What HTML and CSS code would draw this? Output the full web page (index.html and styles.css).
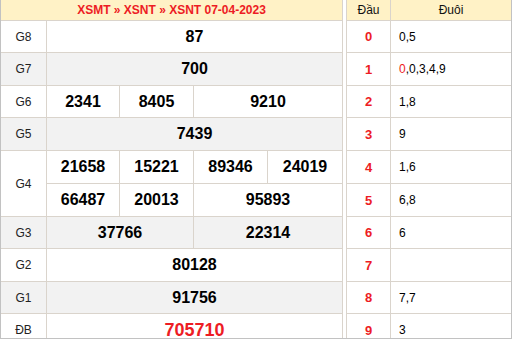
FILE: index.html
```html
<!DOCTYPE html>
<html lang="vi">
<head>
<meta charset="utf-8">
<title>XSNT 07-04-2023</title>
<link rel="stylesheet" href="styles.css">
</head>
<body>
<div class="frame">
  <div class="kq">
    <div class="c hdr full">XSMT » XSNT » XSNT 07-04-2023</div>

    <div class="c lbl">G8</div>
    <div class="c num span4">87</div>

    <div class="c lbl alt">G7</div>
    <div class="c num span4 alt">700</div>

    <div class="c lbl">G6</div>
    <div class="c num">2341</div>
    <div class="c num">8405</div>
    <div class="c num span2">9210</div>

    <div class="c lbl alt">G5</div>
    <div class="c num span4 alt">7439</div>

    <div class="c lbl rows2">G4</div>
    <div class="c num">21658</div>
    <div class="c num">15221</div>
    <div class="c num">89346</div>
    <div class="c num">24019</div>
    <div class="c num">66487</div>
    <div class="c num">20013</div>
    <div class="c num span2">95893</div>

    <div class="c lbl alt">G3</div>
    <div class="c num span2 alt">37766</div>
    <div class="c num span2 alt">22314</div>

    <div class="c lbl">G2</div>
    <div class="c num span4">80128</div>

    <div class="c lbl alt">G1</div>
    <div class="c num span4 alt">91756</div>

    <div class="c lbl">ĐB</div>
    <div class="c num span4 db">705710</div>
  </div>

  <div class="lt">
    <div class="c hdr2">Đầu</div>
    <div class="c hdr2">Đuôi</div>

    <div class="c dau">0</div><div class="c duoi">0,5</div>
    <div class="c dau">1</div><div class="c duoi"><span class="red">0</span>,0,3,4,9</div>
    <div class="c dau">2</div><div class="c duoi">1,8</div>
    <div class="c dau">3</div><div class="c duoi">9</div>
    <div class="c dau">4</div><div class="c duoi">1,6</div>
    <div class="c dau">5</div><div class="c duoi">6,8</div>
    <div class="c dau">6</div><div class="c duoi">6</div>
    <div class="c dau">7</div><div class="c duoi"></div>
    <div class="c dau">8</div><div class="c duoi">7,7</div>
    <div class="c dau">9</div><div class="c duoi">3</div>
  </div>
</div>
</body>
</html>
```
FILE: styles.css
```css
html, body {
  margin: 0;
  padding: 0;
  background: #fff;
}

body {
  font-family: "Liberation Sans", Arial, sans-serif;
  color: #000;
}

.frame {
  width: 512px;
  height: 339px;
  box-sizing: border-box;
  border: 1px solid #c2c2c2;
  border-top: 0;
  overflow: hidden;
  display: flex;
  gap: 3px;
  align-items: flex-start;
}

.kq,
.lt {
  display: grid;
  gap: 1px;
  background: #dad4cc;
  grid-template-rows: 20px 31px 32px 31px 32px 32px 32px 31px 32px 31px 32px;
}

.kq {
  grid-template-columns: 45px 72px 73px 73px 74px;
  border-right: 1px solid #dad4cc;
}

.lt {
  grid-template-columns: 43px 120px;
  border-left: 1px solid #dad4cc;
}

.c {
  background: #fff;
  display: flex;
  align-items: center;
  justify-content: center;
  white-space: nowrap;
}

.alt {
  background: #f2f2f2;
}

.span4 {
  grid-column: span 4;
}

.span2 {
  grid-column: span 2;
}

.full {
  grid-column: 1 / -1;
}

.rows2 {
  grid-row: span 2;
}

.hdr,
.hdr2 {
  background: #fff2c6;
}

.hdr {
  color: #ed1c24;
  font-weight: bold;
  font-size: 12px;
}

.hdr2 {
  font-size: 12px;
  color: #111;
}

.lbl {
  font-size: 12px;
  color: #222;
}

.num {
  font-size: 16px;
  font-weight: bold;
  color: #000;
}

.num.db {
  color: #ed1c24;
  font-size: 18px;
}

.dau {
  color: #ed1c24;
  font-weight: bold;
  font-size: 13px;
}

.duoi {
  justify-content: flex-start;
  padding-left: 8px;
  font-size: 12px;
  color: #000;
}

.red {
  color: #ed1c24;
}
```
